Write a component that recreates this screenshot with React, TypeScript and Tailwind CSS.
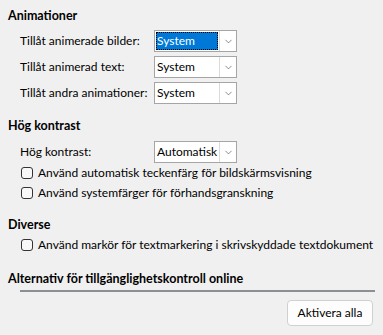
import { ChevronDown } from 'lucide-react';

function Combo({ value, focused = false }: { value: string; focused?: boolean }) {
  return (
    <div className="flex h-[22px] w-[83px] shrink-0 border border-[#a5a5a5] bg-white">
      <div className="flex min-w-0 flex-1 items-center p-px">
        <span
          className={
            focused
              ? 'flex h-full w-full items-center bg-[#0078d7] pl-[1px] text-white outline-1 outline-dotted outline-black -outline-offset-1'
              : 'flex h-full w-full items-center pl-[1px]'
          }
        >
          {value}
        </span>
      </div>
      <div className="flex w-[17px] shrink-0 items-center justify-center border-l border-[#dadada]">
        <ChevronDown size={11} strokeWidth={1.3} className="text-[#404040]" />
      </div>
    </div>
  );
}

function Check({ label }: { label: string }) {
  return (
    <div className="flex h-5 items-center gap-[5px] whitespace-nowrap pl-[13px]">
      <span className="h-[12px] w-[12px] shrink-0 rounded-[3px] border border-[#333] bg-[#f8f8f8]" />
      <span>{label}</span>
    </div>
  );
}

export default function App() {
  return (
    <div
      className="h-[335px] w-[383px] overflow-hidden whitespace-nowrap bg-[#f0f0f0] pl-2 pt-2 text-[12px] text-black"
      style={{ fontFamily: 'Lato, "Liberation Sans", sans-serif' }}
    >
      <div className="h-4 text-[12.5px] font-bold leading-4">Animationer</div>
      <div className="mt-[6px] flex flex-col gap-1 pl-3">
        <div className="flex items-center">
          <span className="w-[134px]">Tillåt animerade bilder:</span>
          <Combo value="System" focused />
        </div>
        <div className="flex items-center">
          <span className="w-[134px]">Tillåt animerad text:</span>
          <Combo value="System" />
        </div>
        <div className="flex items-center">
          <span className="w-[134px]">Tillåt andra animationer:</span>
          <Combo value="System" />
        </div>
      </div>

      <div className="mt-[14px] h-4 text-[12.5px] font-bold leading-4">Hög kontrast</div>
      <div className="mt-[7px] flex items-center pl-3">
        <span className="w-[134px]">Hög kontrast:</span>
        <Combo value="Automatisk" />
      </div>
      <Check label="Använd automatisk teckenfärg för bildskärmsvisning" />
      <Check label="Använd systemfärger för förhandsgranskning" />

      <div className="mt-[14px] h-4 text-[12.5px] font-bold leading-4">Diverse</div>
      <div className="mt-[2px]">
        <Check label="Använd markör för textmarkering i skrivskyddade textdokument" />
      </div>

      <div className="mt-[16px] h-4 text-[12.5px] font-bold leading-4">
        Alternativ för tillgänglighetskontroll online
      </div>
      <div className="mr-2 ml-3 mt-[3px] h-[2px] bg-[#8c8f94]" />
      <div className="mt-2 flex justify-end pr-[10px]">
        <button className="h-[26px] w-[86px] rounded-[4px] border border-[#d0d0d0] bg-[#fdfdfd]">
          Aktivera alla
        </button>
      </div>
    </div>
  );
}
